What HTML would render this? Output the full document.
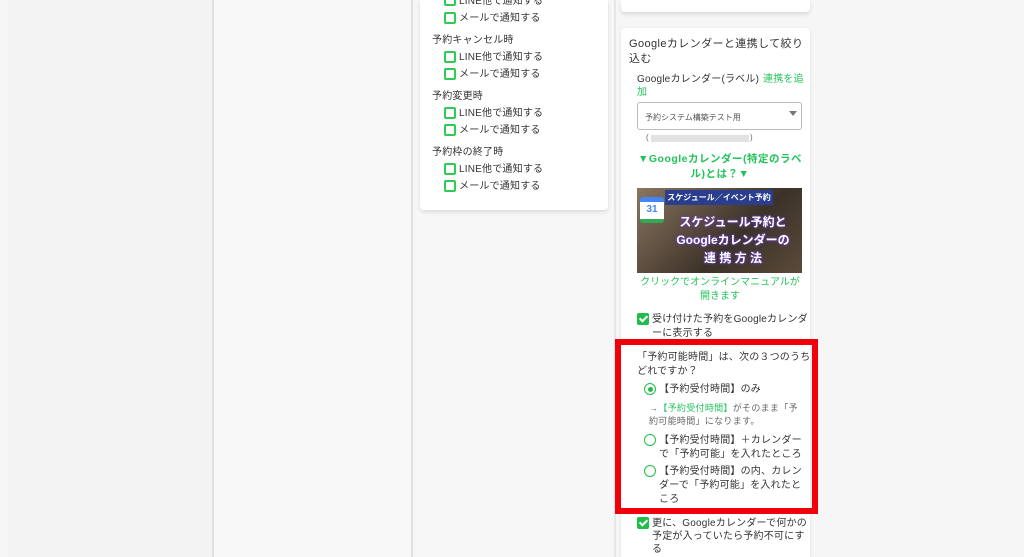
<!DOCTYPE html>
<html><head><meta charset="utf-8"><style>
*{margin:0;padding:0;box-sizing:border-box}
html,body{overflow:hidden}
body{width:1024px;height:557px;background:#f6f6f6;font-family:"Liberation Sans","Noto Sans CJK JP",sans-serif;color:#333;position:relative}
.a{position:absolute}
.t{font-size:10px;line-height:13px;white-space:nowrap;letter-spacing:.2px}
.cb{position:absolute;width:12px;height:12px;border:2px solid #2ecc55;border-radius:2px;background:#fff}
.ck{position:absolute;width:12px;height:12px;background:#1fbe4a;border-radius:2px}
.ck:after{content:"";position:absolute;left:4px;top:1px;width:3px;height:6px;border:solid #fff;border-width:0 2px 2px 0;transform:rotate(45deg)}
.rd{position:absolute;width:12px;height:12px;border:1.5px solid #1fbe4a;border-radius:50%;background:#fff}
.g{color:#22c35a}
</style></head><body>
<div class="a" style="left:8px;top:0;width:204px;height:557px;background:#f3f3f3"></div>
<div class="a" style="left:212px;top:0;width:2px;height:557px;background:#e0e0e0"></div>
<div class="a" style="left:214px;top:0;width:197px;height:557px;background:#f8f8f8"></div>
<div class="a" style="left:411px;top:0;width:2px;height:557px;background:#e0e0e0"></div>
<div class="a" style="left:413px;top:0;width:201px;height:557px;background:#f7f7f7"></div>
<div class="a" style="left:614px;top:0;width:2px;height:557px;background:#e6e6e6"></div>

<div class="a" style="left:420px;top:0;width:188px;height:210px;background:#fff;border-radius:0 0 4px 4px;box-shadow:0 2px 4px rgba(0,0,0,.12)"></div>
<div class="cb" style="left:444px;top:-6px"></div><div class="a t" style="left:459px;top:-5px">LINE他で通知する</div>
<div class="cb" style="left:444px;top:12px"></div><div class="a t" style="left:459px;top:12px">メールで通知する</div>
<div class="a t" style="left:432px;top:34px">予約キャンセル時</div>
<div class="cb" style="left:444px;top:51px"></div><div class="a t" style="left:459px;top:51px">LINE他で通知する</div>
<div class="cb" style="left:444px;top:68px"></div><div class="a t" style="left:459px;top:68px">メールで通知する</div>
<div class="a t" style="left:432px;top:90px">予約変更時</div>
<div class="cb" style="left:444px;top:107px"></div><div class="a t" style="left:459px;top:107px">LINE他で通知する</div>
<div class="cb" style="left:444px;top:124px"></div><div class="a t" style="left:459px;top:124px">メールで通知する</div>
<div class="a t" style="left:432px;top:146px">予約枠の終了時</div>
<div class="cb" style="left:444px;top:163px"></div><div class="a t" style="left:459px;top:163px">LINE他で通知する</div>
<div class="cb" style="left:444px;top:180px"></div><div class="a t" style="left:459px;top:180px">メールで通知する</div>

<div class="a" style="left:621px;top:0;width:189px;height:12px;background:#fff;border-radius:0 0 4px 4px;box-shadow:0 2px 4px rgba(0,0,0,.12)"></div>
<div class="a" style="left:621px;top:28px;width:189px;height:529px;background:#fff;border-radius:4px 4px 0 0;box-shadow:0 1px 3px rgba(0,0,0,.1)"></div>
<div class="a" style="left:629px;top:37px;font-size:11px;line-height:15px;white-space:nowrap;letter-spacing:.4px">Googleカレンダーと連携して絞り<br>込む</div>
<div class="a t" style="left:637px;top:73px">Googleカレンダー(ラベル)</div>
<div class="a t g" style="left:763px;top:73px">連携を追</div>
<div class="a t g" style="left:637px;top:86px">加</div>
<div class="a" style="left:637px;top:102px;width:165px;height:28px;border:1px solid #bbb;border-radius:3px"></div>
<div class="a" style="left:645px;top:112px;font-size:8px;color:#555">予約システム構築テスト用</div>
<div class="a" style="left:789px;top:111px;width:0;height:0;border-left:4px solid transparent;border-right:4px solid transparent;border-top:5px solid #777"></div>
<div class="a" style="left:646px;top:133px;font-size:8px;color:#666">(</div>
<div class="a" style="left:651px;top:135px;width:98px;height:7px;background:#e2e2e2"></div>
<div class="a" style="left:750px;top:133px;font-size:8px;color:#666">)</div>
<div class="a g" style="left:637px;top:152px;width:166px;text-align:center;font-size:10.5px;line-height:15px;font-weight:bold;letter-spacing:.5px">▼Googleカレンダー(特定のラベル)とは？▼</div>
<div class="a" style="left:637px;top:188px;width:165px;height:85px;background:linear-gradient(135deg,#8a7560,#3c3228 60%,#5a4a3a)"></div>
<div class="a" style="left:665px;top:190px;width:108px;height:15px;background:#2a3d8f;color:#fff;font-size:8px;font-weight:bold;text-align:center;line-height:15px;white-space:nowrap;overflow:hidden">スケジュール／イベント予約</div>
<div class="a" style="left:640px;top:197px;width:24px;height:26px;background:#fff;border-radius:3px;border-top:5px solid #4285f4;border-bottom:4px solid #34a853;font-size:10px;font-weight:bold;color:#4285f4;text-align:center;line-height:16px">31</div>
<div class="a" style="left:664px;top:213px;width:138px;text-align:center;color:#fff;font-weight:bold;font-size:12px;line-height:18px;white-space:nowrap;text-shadow:0 0 2px #6a3cc0,0 0 3px #6a3cc0">スケジュール予約と<br>Googleカレンダーの<br>連 携 方 法</div>
<div class="a g" style="left:637px;top:276px;width:166px;text-align:center;font-size:10px;line-height:14px">クリックでオンラインマニュアルが開きます</div>
<div class="ck" style="left:637px;top:313px"></div>
<div class="a t" style="left:652px;top:313px">受け付けた予約をGoogleカレンダ</div>
<div class="a t" style="left:652px;top:327px">ーに表示する</div>

<div class="a" style="left:615px;top:339px;width:203px;height:175px;border:6px solid #f0000a"></div>
<div class="a t" style="left:637px;top:351px">「予約可能時間」は、次の３つのうち</div>
<div class="a t" style="left:637px;top:365px">どれですか？</div>
<div class="rd" style="left:644px;top:383px"></div><div class="a" style="left:647.5px;top:386.5px;width:5px;height:5px;border-radius:50%;background:#1fbe4a"></div>
<div class="a t" style="left:659px;top:383px">【予約受付時間】のみ</div>
<div class="a" style="left:649px;top:402px;font-size:9px;line-height:13px;color:#666;white-space:nowrap;letter-spacing:.3px">→<span class="g">【予約受付時間】</span>がそのまま「予</div>
<div class="a" style="left:649px;top:415px;font-size:9px;line-height:13px;color:#666;white-space:nowrap;letter-spacing:.3px">約可能時間」になります。</div>
<div class="rd" style="left:644px;top:434px"></div>
<div class="a t" style="left:659px;top:434px">【予約受付時間】＋カレンダー</div>
<div class="a t" style="left:659px;top:448px">で「予約可能」を入れたところ</div>
<div class="rd" style="left:644px;top:465px"></div>
<div class="a t" style="left:659px;top:465px">【予約受付時間】の内、カレン</div>
<div class="a t" style="left:659px;top:479px">ダーで「予約可能」を入れたと</div>
<div class="a t" style="left:659px;top:493px">ころ</div>
<div class="ck" style="left:637px;top:517px"></div>
<div class="a t" style="left:652px;top:517px">更に、Googleカレンダーで何かの</div>
<div class="a t" style="left:652px;top:530px">予定が入っていたら予約不可にす</div>
<div class="a t" style="left:652px;top:543px">る</div>
</body></html>
